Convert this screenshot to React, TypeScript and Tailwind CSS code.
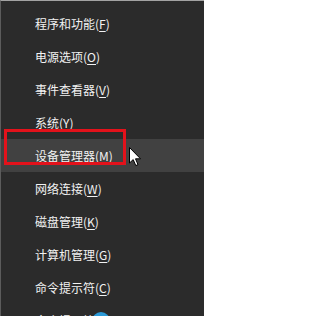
const items: { label: string; key: string; active?: boolean }[] = [
  { label: "程序和功能", key: "F" },
  { label: "电源选项", key: "O" },
  { label: "事件查看器", key: "V" },
  { label: "系统", key: "Y" },
  { label: "设备管理器", key: "M", active: true },
  { label: "网络连接", key: "W" },
  { label: "磁盘管理", key: "K" },
  { label: "计算机管理", key: "G" },
  { label: "命令提示符", key: "C" },
  { label: "命令提示符(管理员)", key: "A" },
];

function Cursor() {
  return (
    <svg className="absolute left-[128px] top-[146px]" width="13" height="20" viewBox="0 0 13 20">
      <path
        d="M0.5 0.5 L0.5 16 L4.2 12.6 L6.8 18.6 L9 17.6 L6.5 11.8 L11.5 11.8 Z"
        fill="#ffffff"
        stroke="#000000"
        strokeWidth="1"
        strokeLinejoin="miter"
      />
    </svg>
  );
}

export default function App() {
  return (
    <div
      className="relative h-[316px] w-[204px] overflow-hidden border-t border-l border-t-[#a3a3a3] border-l-[#5c5c5c] bg-[#2b2b2b] pt-[6px] text-[12px] text-[#f2f2f2]"
      style={{ fontFamily: '"Noto Sans CJK SC", "Noto Sans", sans-serif' }}
    >
      {items.map((item) => (
        <div
          key={item.key}
          className={`flex h-[33px] items-center pl-[34px] ${item.active ? "bg-[#414141]" : ""}`}
        >
          <span>
            {item.label}(<span className="underline underline-offset-2">{item.key}</span>)
          </span>
        </div>
      ))}

      <div className="absolute left-[3px] top-[128px] h-[36px] w-[122px] border-[3px] border-[#e3121b]" />
      <Cursor />
      <div className="absolute left-[91px] top-[311px] h-[18px] w-[18px] rounded-full bg-[#2b9ad8]" />
    </div>
  );
}
